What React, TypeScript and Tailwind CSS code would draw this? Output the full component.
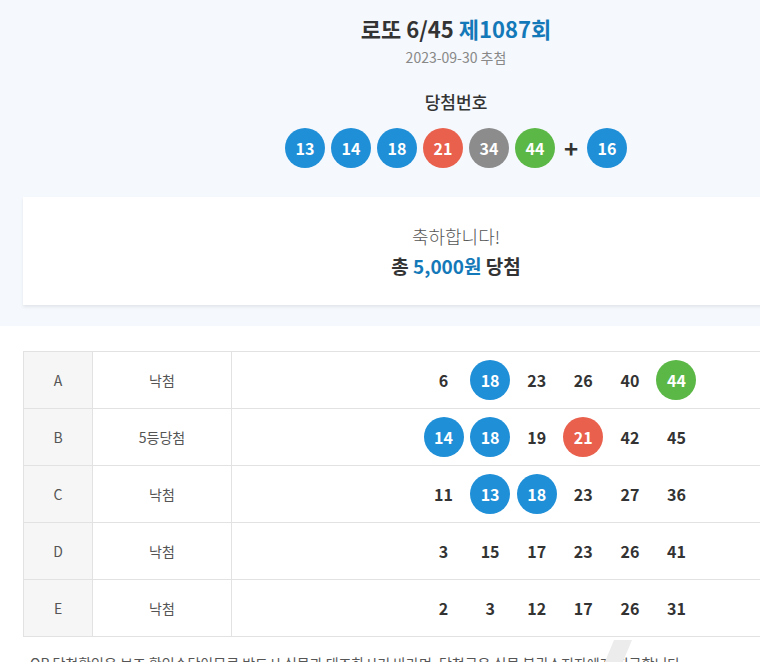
import React from 'react';

type Game = { label: string; result: string; nums: number[] };

const winning = [13, 14, 18, 21, 34, 44];
const bonus = 16;

const games: Game[] = [
  { label: 'A', result: '낙첨', nums: [6, 18, 23, 26, 40, 44] },
  { label: 'B', result: '5등당첨', nums: [14, 18, 19, 21, 42, 45] },
  { label: 'C', result: '낙첨', nums: [11, 13, 18, 23, 27, 36] },
  { label: 'D', result: '낙첨', nums: [3, 15, 17, 23, 26, 41] },
  { label: 'E', result: '낙첨', nums: [2, 3, 12, 17, 26, 31] },
];

// 번호대별 공 색상
function ballColor(n: number) {
  if (n <= 10) return 'bg-[#f5b800]';
  if (n <= 20) return 'bg-[#1f8fd8]';
  if (n <= 30) return 'bg-[#e9604d]';
  if (n <= 40) return 'bg-[#8c8c8c]';
  return 'bg-[#5bb846]';
}

function Ball({ n }: { n: number }) {
  return (
    <span
      className={`w-10 h-10 rounded-full flex items-center justify-center text-white text-[16px] font-bold ${ballColor(n)}`}
    >
      {n}
    </span>
  );
}

function TicketNumber({ n }: { n: number }) {
  const matched = winning.includes(n) || n === bonus;
  if (matched) return <Ball n={n} />;
  return (
    <span className="w-10 h-10 flex items-center justify-center text-[16px] font-bold text-[#333]">
      {n}
    </span>
  );
}

export default function App() {
  return (
    <div
      className="w-[912px] bg-white relative"
      style={{ fontFamily: '"Noto Sans CJK KR", "Noto Sans", sans-serif' }}
    >
      {/* 당첨 정보 */}
      <div className="bg-[#f5f8fc] pt-[12px] pb-[21px]">
        <h1 className="text-center text-[22px] leading-[32px] font-bold text-[#333]">
          로또 6/45 <span className="text-[#1479b8]">제1087회</span>
        </h1>
        <p className="mt-[3px] text-center text-[14px] leading-[20px] text-[#888]">2023-09-30 추첨</p>
        <p className="mt-[23px] text-center text-[17px] leading-[24px] font-medium text-[#333]">당첨번호</p>
        <div className="mt-[14px] flex justify-center items-center gap-[6px]">
          {winning.map(n => (
            <Ball key={n} n={n} />
          ))}
          <span className="w-[20px] text-center text-[24px] leading-none font-bold text-[#333]">+</span>
          <Ball n={bonus} />
        </div>

        <div className="mt-[29px] mx-[23px] bg-white shadow-[0_2px_3px_rgba(0,0,0,0.08)] pt-[26px] pb-[26px] text-center">
          <p className="text-[18px] leading-[26px] font-light text-[#555]">축하합니다!</p>
          <p className="mt-[4px] text-[19px] leading-[26px] font-bold text-[#333]">
            총 <span className="text-[#1479b8]">5,000원</span> 당첨
          </p>
        </div>
      </div>

      {/* 구매 번호 */}
      <div className="mt-[25px] mx-[23px] border border-[#e2e2e2]">
        {games.map((g, i) => (
          <div key={g.label} className={`flex ${i > 0 ? 'h-[57px] border-t border-[#e2e2e2]' : 'h-[56px]'}`}>
            <div className="w-[68px] bg-[#f6f6f6] flex items-center justify-center text-[14px] text-[#555]">
              {g.label}
            </div>
            <div className="w-[139px] border-l border-[#e2e2e2] flex items-center justify-center text-[14px] text-[#555]">
              {g.result}
            </div>
            <div className="flex-1 border-l border-[#e2e2e2] flex items-center justify-center gap-[6.6px]">
              {g.nums.map((n, j) => (
                <TicketNumber key={j} n={n} />
              ))}
            </div>
          </div>
        ))}
      </div>

      <p className="mt-[16px] px-[30px] text-[14px] leading-[20px] text-[#555] whitespace-nowrap">
        QR 당첨확인은 보조 확인수단이므로 반드시 실물과 대조하시기 바라며, 당첨금은 실물 복권소지자에게 지급합니다.
      </p>

      <svg className="absolute left-[604px] top-[640px]" width="28" height="24" viewBox="0 0 28 24">
        <polygon points="10,0 28,0 18,24 0,24" fill="#ececec" />
      </svg>
    </div>
  );
}
